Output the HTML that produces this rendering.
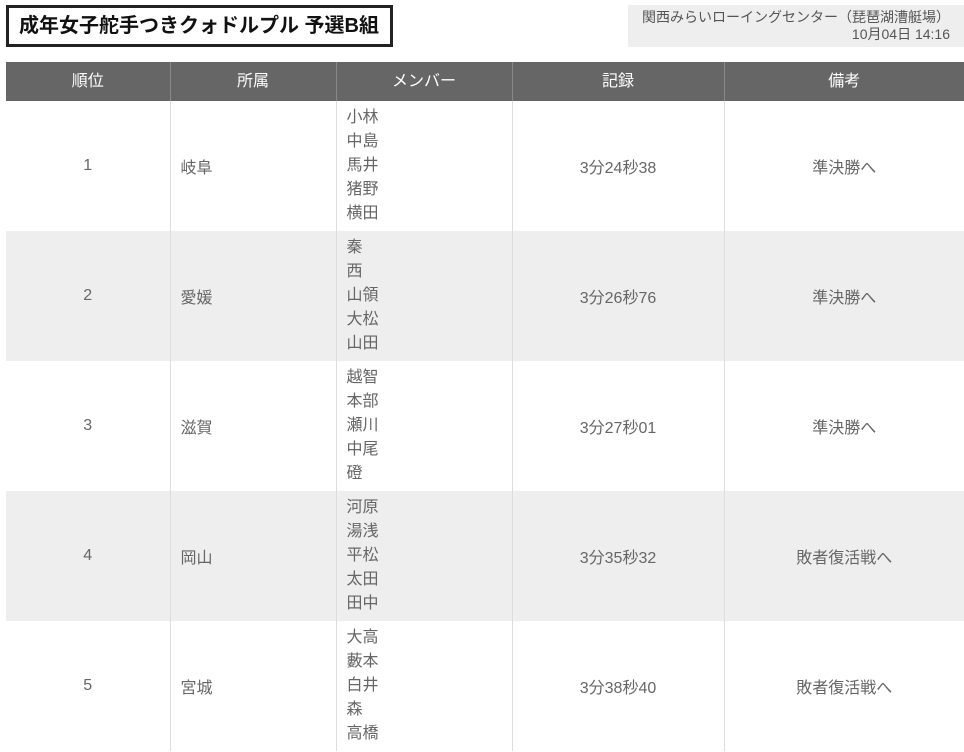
<!DOCTYPE html>
<html><head><meta charset="utf-8"><style>
body{margin:0;background:#fff;font-family:"Liberation Sans","Noto Sans CJK JP",sans-serif;width:964px;height:752px;overflow:hidden;position:relative}
.title{position:absolute;left:6px;top:5px;height:36px;border:3px solid #222;font-weight:bold;font-size:20px;line-height:36px;padding-left:10px;box-sizing:content-box;width:371px;color:#111;white-space:nowrap}
.info{position:absolute;left:628px;top:5px;width:336px;height:42px;background:#eee;color:#555;font-size:14px;line-height:17px;text-align:right;box-sizing:border-box;padding:4px 14px 0 0}
table{position:absolute;left:6px;top:62px;border-collapse:collapse;width:958px;table-layout:fixed}
th{background:#666;color:#fff;font-weight:normal;font-size:16px;height:39px;line-height:20px;border-left:1px solid #888;padding:0}
th:first-child{border-left:none}
td{height:130px;color:#666;font-size:16px;border-left:1px solid #ddd;text-align:center;padding:0}
td:first-child{border-left:none}
tr.g td{background:#eee}
td.l{text-align:left;padding-left:10px}
td.m{text-align:left;padding-left:10px;line-height:24px}
</style></head><body>
<div class="title">成年女子舵手つきクォドルプル 予選B組</div>
<div class="info">関西みらいローイングセンター（琵琶湖漕艇場）<br>10月04日 14:16</div>
<table>
<colgroup><col style="width:164px"><col style="width:166px"><col style="width:176px"><col style="width:212px"><col style="width:240px"></colgroup>
<tr><th>順位</th><th>所属</th><th>メンバー</th><th>記録</th><th>備考</th></tr>
<tr><td>1</td><td class="l">岐阜</td><td class="m">小林<br>中島<br>馬井<br>猪野<br>横田</td><td>3分24秒38</td><td>準決勝へ</td></tr>
<tr class="g"><td>2</td><td class="l">愛媛</td><td class="m">秦<br>西<br>山領<br>大松<br>山田</td><td>3分26秒76</td><td>準決勝へ</td></tr>
<tr><td>3</td><td class="l">滋賀</td><td class="m">越智<br>本部<br>瀬川<br>中尾<br>磴</td><td>3分27秒01</td><td>準決勝へ</td></tr>
<tr class="g"><td>4</td><td class="l">岡山</td><td class="m">河原<br>湯浅<br>平松<br>太田<br>田中</td><td>3分35秒32</td><td>敗者復活戦へ</td></tr>
<tr><td>5</td><td class="l">宮城</td><td class="m">大高<br>藪本<br>白井<br>森<br>高橋</td><td>3分38秒40</td><td>敗者復活戦へ</td></tr>
</table>
</body></html>
